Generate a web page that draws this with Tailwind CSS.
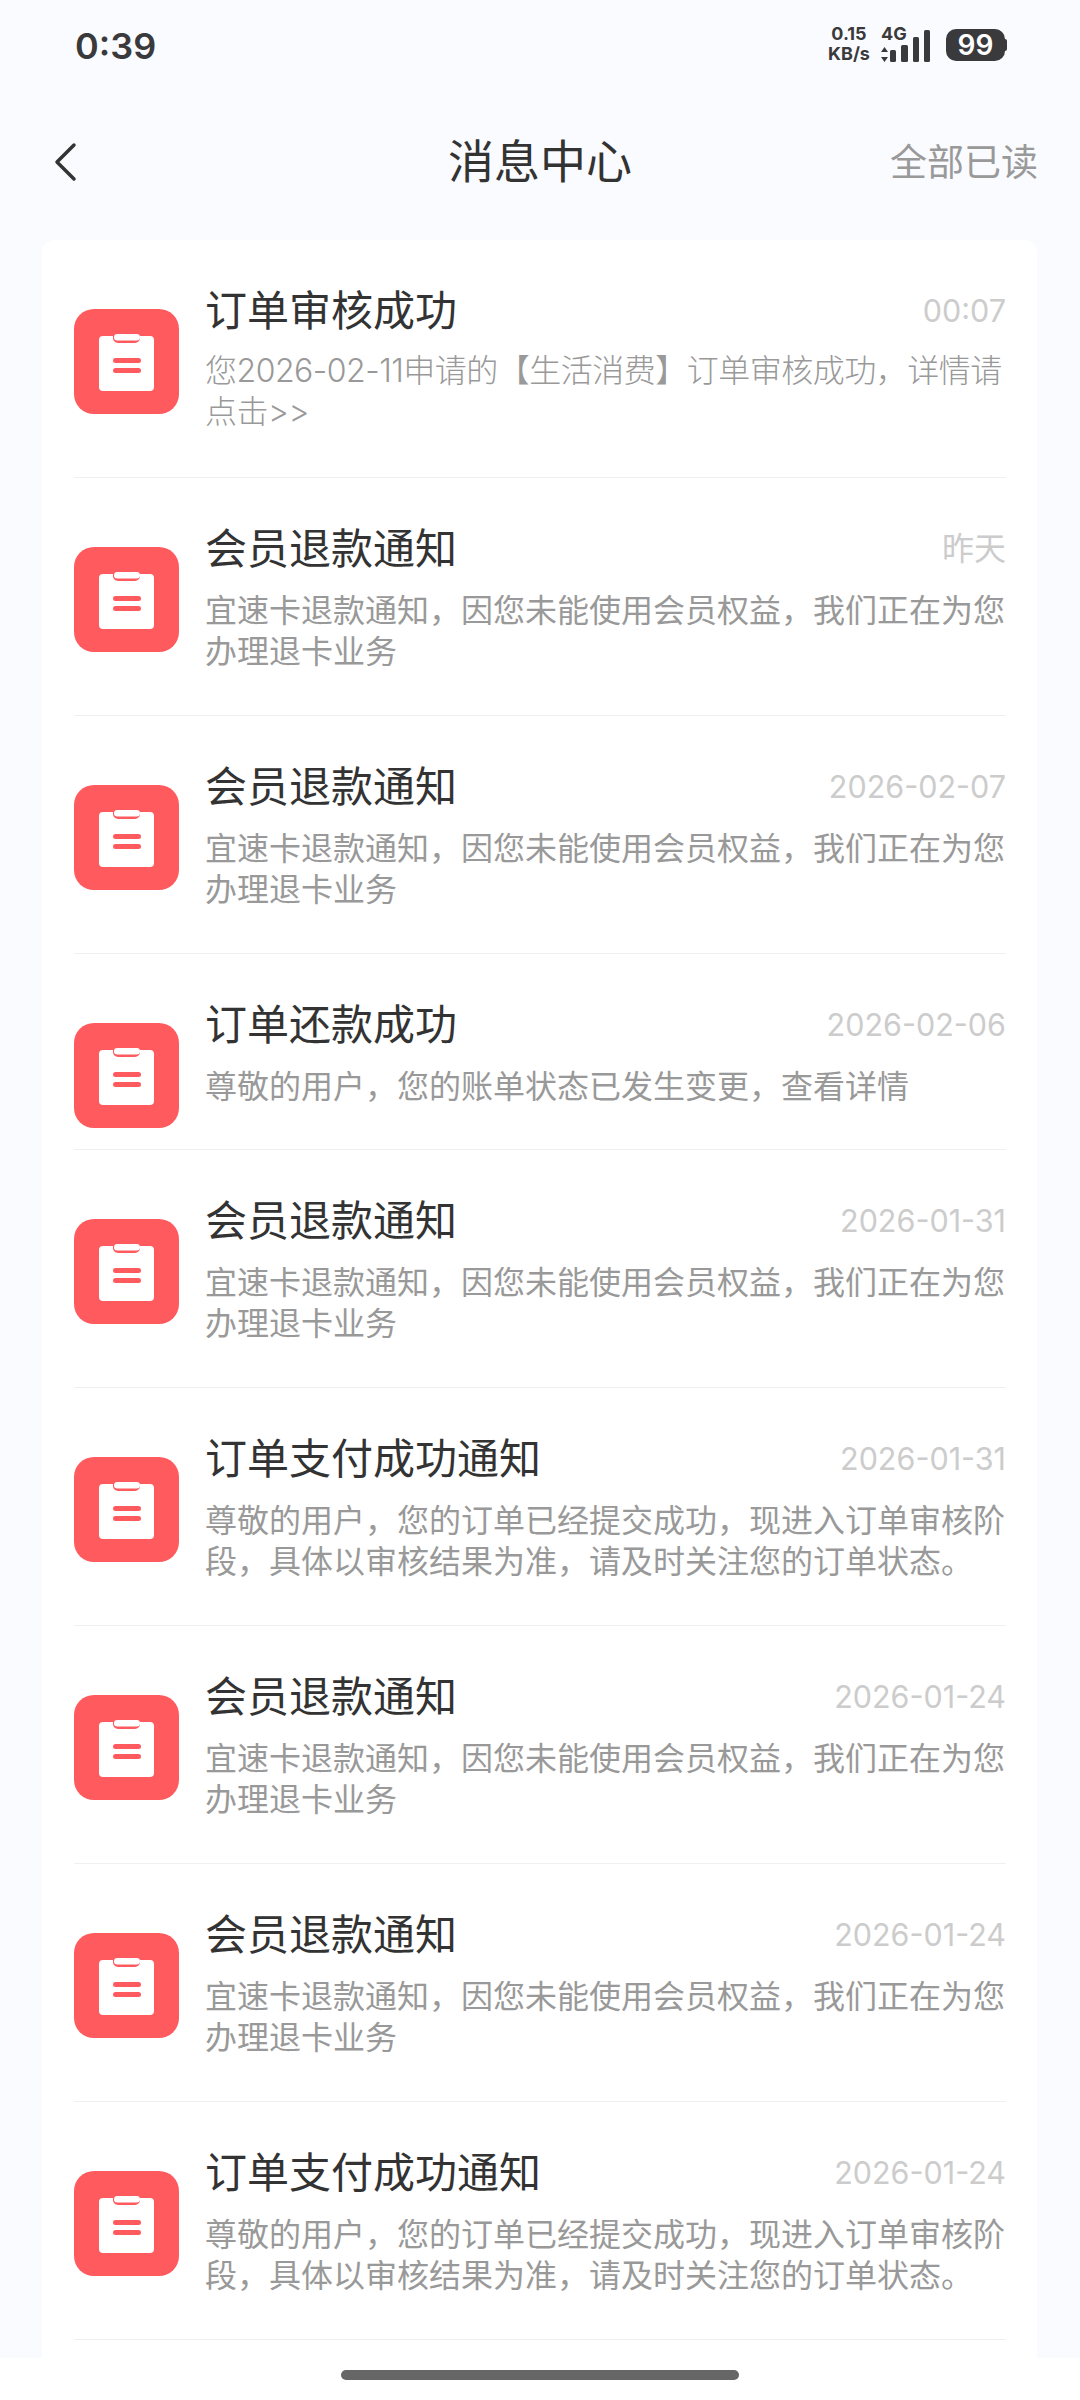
<!doctype html>
<html lang="zh-CN">
<head>
<meta charset="utf-8">
<script src="https://cdn.jsdelivr.net/npm/@tailwindcss/browser@4"></script>
<title>消息中心</title>
</head>
<body class="m-0">
<svg width="0" height="0" class="absolute">
  <symbol id="doc" viewBox="0 0 105 105">
    <rect width="105" height="105" rx="20" fill="#ff5a5e"/>
    <path d="M29 27h10v2a5 5 0 0 0 5 5h17a5 5 0 0 0 5-5v-2h10a4 4 0 0 1 4 4v47a4 4 0 0 1-4 4H29a4 4 0 0 1-4-4V31a4 4 0 0 1 4-4z" fill="#fff"/>
    <rect x="40" y="25" width="26" height="6.5" rx="3.25" fill="#fff"/>
    <rect x="39" y="49" width="28" height="5" rx="2.5" fill="#ff5a5e"/>
    <rect x="39" y="59" width="28" height="5" rx="2.5" fill="#ff5a5e"/>
  </symbol>
</svg>
<div class="relative w-[1080px] h-[2400px] overflow-hidden bg-[#fafbff] font-['Noto_Sans_CJK_SC','Noto_Sans',sans-serif]">

  <!-- status bar -->
  <div class="h-[92px] flex items-start justify-between pl-[75px] pr-[73px] text-[#3a3a3c]">
    <span class="mt-[21px] text-[36px] leading-[50px] font-semibold font-['Inter',sans-serif]">0:39</span>
    <div class="flex items-start mt-[24px]">
      <div class="w-[46px] flex flex-col items-center text-[18px] leading-[20px] font-bold font-['Inter',sans-serif]">
        <span>0.15</span>
        <span>KB/s</span>
      </div>
      <div class="relative w-[72px] ml-[6px] h-[38px]">
        <span class="absolute left-[3px] top-[0px] text-[18px] leading-[20px] font-bold font-['Inter',sans-serif]">4G</span>
        <svg class="absolute left-0 top-0" width="60" height="38" viewBox="0 0 60 38" fill="#3a3a3c">
          <path d="M6.5 23l3.500 5h-7zM6.500 38l3.500-5h-7z"/>
          <rect x="12" y="26" width="6" height="12" rx="1.500"/>
          <rect x="23" y="21" width="7" height="17" rx="1.500"/>
          <rect x="35" y="13" width="6" height="25" rx="1.500"/>
          <rect x="46" y="6" width="6" height="32" rx="1.500"/>
        </svg>
      </div>
      <div class="flex items-center mt-[5px] -ml-[4px]">
        <div class="w-[59px] h-[32px] rounded-[10px] bg-[#3a3a3c] text-white flex items-center justify-center text-[28px] leading-[32px] font-semibold font-['Inter',sans-serif]">99</div>
        <div class="w-[2px] h-[12px] rounded-r-[2px] bg-[#3a3a3c]"></div>
      </div>
    </div>
  </div>

  <!-- header -->
  <div class="relative h-[148px] flex items-start justify-center">
    <svg class="absolute left-[52px] top-[50px]" width="26" height="40" viewBox="0 0 26 40" fill="none" stroke="#333" stroke-width="3.500" stroke-linecap="round" stroke-linejoin="round"><path d="M22 3 L5 20 L22 37"/></svg>
    <h1 class="mt-[35px] text-[46px] leading-[62px] font-normal text-[#333]">消息中心</h1>
    <span class="absolute right-[42px] top-[44px] text-[37px] leading-[48px] text-[#999]">全部已读</span>
  </div>

  <!-- list card -->
  <div class="mx-[42px] w-[995px] rounded-[12px] bg-white pl-[32px] pr-[31px] h-[2200px]">

    <div class="h-[238px] flex items-start border-b border-[#f0f0f0]">
      <svg class="mt-[69px] shrink-0" width="105" height="105"><use href="#doc"/></svg>
      <div class="ml-[26px] flex-1 pt-[38px]">
        <div class="flex items-center justify-between h-[60px]"><span class="text-[42px] leading-[60px] text-[#333]">订单审核成功</span><span class="mt-[6px] text-[30.5px] leading-[60px] text-[#ccc] font-['Inter',sans-serif]">00:07</span></div>
        <p class="mt-[12px] text-[32px] leading-[41px] tracking-[-0.5px] text-[#999] font-['Inter','Noto_Sans_CJK_SC',sans-serif] font-light">您2026-02-11申请的【生活消费】订单审核成功，详情请点击&gt;&gt;</p>
      </div>
    </div>

    <div class="h-[238px] flex items-start border-b border-[#f0f0f0]">
      <svg class="mt-[69px] shrink-0" width="105" height="105"><use href="#doc"/></svg>
      <div class="ml-[26px] flex-1 pt-[38px]">
        <div class="flex items-center justify-between h-[60px]"><span class="text-[42px] leading-[60px] text-[#333]">会员退款通知</span><span class="text-[32px] leading-[60px] text-[#ccc]">昨天</span></div>
        <p class="mt-[12px] text-[32px] leading-[41px] text-[#999]">宜速卡退款通知，因您未能使用会员权益，我们正在为您办理退卡业务</p>
      </div>
    </div>

    <div class="h-[238px] flex items-start border-b border-[#f0f0f0]">
      <svg class="mt-[69px] shrink-0" width="105" height="105"><use href="#doc"/></svg>
      <div class="ml-[26px] flex-1 pt-[38px]">
        <div class="flex items-center justify-between h-[60px]"><span class="text-[42px] leading-[60px] text-[#333]">会员退款通知</span><span class="mt-[6px] text-[30.5px] leading-[60px] text-[#ccc] font-['Inter',sans-serif]">2026-02-07</span></div>
        <p class="mt-[12px] text-[32px] leading-[41px] text-[#999]">宜速卡退款通知，因您未能使用会员权益，我们正在为您办理退卡业务</p>
      </div>
    </div>

    <div class="h-[196px] flex items-start border-b border-[#f0f0f0]">
      <svg class="mt-[69px] shrink-0" width="105" height="105"><use href="#doc"/></svg>
      <div class="ml-[26px] flex-1 pt-[38px]">
        <div class="flex items-center justify-between h-[60px]"><span class="text-[42px] leading-[60px] text-[#333]">订单还款成功</span><span class="mt-[6px] text-[30.5px] leading-[60px] text-[#ccc] font-['Inter',sans-serif]">2026-02-06</span></div>
        <p class="mt-[12px] text-[32px] leading-[41px] text-[#999]">尊敬的用户，您的账单状态已发生变更，查看详情</p>
      </div>
    </div>

    <div class="h-[238px] flex items-start border-b border-[#f0f0f0]">
      <svg class="mt-[69px] shrink-0" width="105" height="105"><use href="#doc"/></svg>
      <div class="ml-[26px] flex-1 pt-[38px]">
        <div class="flex items-center justify-between h-[60px]"><span class="text-[42px] leading-[60px] text-[#333]">会员退款通知</span><span class="mt-[6px] text-[30.5px] leading-[60px] text-[#ccc] font-['Inter',sans-serif]">2026-01-31</span></div>
        <p class="mt-[12px] text-[32px] leading-[41px] text-[#999]">宜速卡退款通知，因您未能使用会员权益，我们正在为您办理退卡业务</p>
      </div>
    </div>

    <div class="h-[238px] flex items-start border-b border-[#f0f0f0]">
      <svg class="mt-[69px] shrink-0" width="105" height="105"><use href="#doc"/></svg>
      <div class="ml-[26px] flex-1 pt-[38px]">
        <div class="flex items-center justify-between h-[60px]"><span class="text-[42px] leading-[60px] text-[#333]">订单支付成功通知</span><span class="mt-[6px] text-[30.5px] leading-[60px] text-[#ccc] font-['Inter',sans-serif]">2026-01-31</span></div>
        <p class="mt-[12px] text-[32px] leading-[41px] text-[#999]">尊敬的用户，您的订单已经提交成功，现进入订单审核阶段，具体以审核结果为准，请及时关注您的订单状态。</p>
      </div>
    </div>

    <div class="h-[238px] flex items-start border-b border-[#f0f0f0]">
      <svg class="mt-[69px] shrink-0" width="105" height="105"><use href="#doc"/></svg>
      <div class="ml-[26px] flex-1 pt-[38px]">
        <div class="flex items-center justify-between h-[60px]"><span class="text-[42px] leading-[60px] text-[#333]">会员退款通知</span><span class="mt-[6px] text-[30.5px] leading-[60px] text-[#ccc] font-['Inter',sans-serif]">2026-01-24</span></div>
        <p class="mt-[12px] text-[32px] leading-[41px] text-[#999]">宜速卡退款通知，因您未能使用会员权益，我们正在为您办理退卡业务</p>
      </div>
    </div>

    <div class="h-[238px] flex items-start border-b border-[#f0f0f0]">
      <svg class="mt-[69px] shrink-0" width="105" height="105"><use href="#doc"/></svg>
      <div class="ml-[26px] flex-1 pt-[38px]">
        <div class="flex items-center justify-between h-[60px]"><span class="text-[42px] leading-[60px] text-[#333]">会员退款通知</span><span class="mt-[6px] text-[30.5px] leading-[60px] text-[#ccc] font-['Inter',sans-serif]">2026-01-24</span></div>
        <p class="mt-[12px] text-[32px] leading-[41px] text-[#999]">宜速卡退款通知，因您未能使用会员权益，我们正在为您办理退卡业务</p>
      </div>
    </div>

    <div class="h-[238px] flex items-start border-b border-[#f0f0f0]">
      <svg class="mt-[69px] shrink-0" width="105" height="105"><use href="#doc"/></svg>
      <div class="ml-[26px] flex-1 pt-[38px]">
        <div class="flex items-center justify-between h-[60px]"><span class="text-[42px] leading-[60px] text-[#333]">订单支付成功通知</span><span class="mt-[6px] text-[30.5px] leading-[60px] text-[#ccc] font-['Inter',sans-serif]">2026-01-24</span></div>
        <p class="mt-[12px] text-[32px] leading-[41px] text-[#999]">尊敬的用户，您的订单已经提交成功，现进入订单审核阶段，具体以审核结果为准，请及时关注您的订单状态。</p>
      </div>
    </div>
  </div>

  <!-- navigation bar overlay -->
  <div class="absolute left-0 right-0 bottom-0 h-[42px] bg-white flex justify-center pt-[12px]">
    <div class="w-[398px] h-[10px] rounded-full bg-[#666]"></div>
  </div>
</div>
</body>
</html>
